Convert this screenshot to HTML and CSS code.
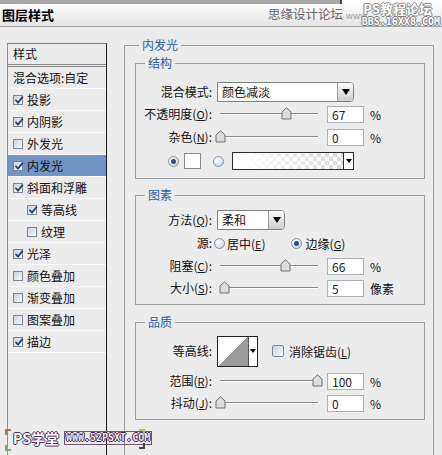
FILE: index.html
```html
<!DOCTYPE html>
<html lang="zh-CN">
<head>
<meta charset="utf-8">
<title>图层样式</title>
<link rel="stylesheet" href="styles.css">
</head>
<body>
<div class="win">
  <div class="topstrip"><div class="behind"></div></div>
  <div class="titlebar">
    <span class="title">图层样式</span>
    <span class="site">思缘设计论坛 <small>www.</small></span>
  </div>
  <div class="main">
    <div class="side">
      <div class="side-head">样式</div>
      <div class="item">混合选项:自定</div>
      <div class="item"><span class="cb on"><svg viewBox="0 0 10 10"><path d="M1.5 4.8 L4 7.6 L8.8 1.6"/></svg></span>投影</div>
      <div class="item"><span class="cb on"><svg viewBox="0 0 10 10"><path d="M1.5 4.8 L4 7.6 L8.8 1.6"/></svg></span>内阴影</div>
      <div class="item"><span class="cb"></span>外发光</div>
      <div class="item sel"><span class="cb on"><svg viewBox="0 0 10 10"><path d="M1.5 4.8 L4 7.6 L8.8 1.6"/></svg></span>内发光</div>
      <div class="item"><span class="cb on"><svg viewBox="0 0 10 10"><path d="M1.5 4.8 L4 7.6 L8.8 1.6"/></svg></span>斜面和浮雕</div>
      <div class="item sub"><span class="cb on"><svg viewBox="0 0 10 10"><path d="M1.5 4.8 L4 7.6 L8.8 1.6"/></svg></span>等高线</div>
      <div class="item sub"><span class="cb"></span>纹理</div>
      <div class="item"><span class="cb on"><svg viewBox="0 0 10 10"><path d="M1.5 4.8 L4 7.6 L8.8 1.6"/></svg></span>光泽</div>
      <div class="item"><span class="cb"></span>颜色叠加</div>
      <div class="item"><span class="cb"></span>渐变叠加</div>
      <div class="item"><span class="cb"></span>图案叠加</div>
      <div class="item"><span class="cb on"><svg viewBox="0 0 10 10"><path d="M1.5 4.8 L4 7.6 L8.8 1.6"/></svg></span>描边</div>
    </div>

    <fieldset class="outer">
      <legend>内发光</legend>

      <fieldset class="group g1">
        <legend>结构</legend>
        <div class="row r-select">
          <span class="lbl">混合模式:</span>
          <div class="select wide"><span class="val">颜色减淡</span><span class="btn"><i class="tri"></i></span></div>
        </div>
        <div class="row r-slide">
          <span class="lbl">不透明度(<u>O</u>):</span>
          <div class="slider"><div class="track"><svg class="thumb" style="left:67%" viewBox="0 0 11 13"><path d="M1 5 L5.5 0.8 L10 5 V12 H1 Z"/></svg></div></div>
          <span class="num">67</span><span class="unit">%</span>
        </div>
        <div class="row r-slide">
          <span class="lbl">杂色(<u>N</u>):</span>
          <div class="slider"><div class="track"><svg class="thumb" style="left:0%" viewBox="0 0 11 13"><path d="M1 5 L5.5 0.8 L10 5 V12 H1 Z"/></svg></div></div>
          <span class="num">0</span><span class="unit">%</span>
        </div>
        <div class="row r-color">
          <span class="radio on"></span>
          <span class="swatch"></span>
          <span class="radio second"></span>
          <div class="grad"><span class="grad-fill"></span><span class="grad-btn"><i class="tri small"></i></span></div>
        </div>
      </fieldset>

      <fieldset class="group g2">
        <legend>图素</legend>
        <div class="row r-select">
          <span class="lbl">方法(<u>Q</u>):</span>
          <div class="select narrow"><span class="val">柔和</span><span class="btn"><i class="tri"></i></span></div>
        </div>
        <div class="row r-source">
          <span class="lbl tight">源:</span>
          <span class="radio"></span><span class="opt">居中(<u>E</u>)</span>
          <span class="radio on gap"></span><span class="opt">边缘(<u>G</u>)</span>
        </div>
        <div class="row r-slide2">
          <span class="lbl">阻塞(<u>C</u>):</span>
          <div class="slider"><div class="track"><svg class="thumb" style="left:66%" viewBox="0 0 11 13"><path d="M1 5 L5.5 0.8 L10 5 V12 H1 Z"/></svg></div></div>
          <span class="num">66</span><span class="unit">%</span>
        </div>
        <div class="row r-slide2">
          <span class="lbl">大小(<u>S</u>):</span>
          <div class="slider"><div class="track"><svg class="thumb" style="left:4%" viewBox="0 0 11 13"><path d="M1 5 L5.5 0.8 L10 5 V12 H1 Z"/></svg></div></div>
          <span class="num">5</span><span class="unit">像素</span>
        </div>
      </fieldset>

      <fieldset class="group g3">
        <legend>品质</legend>
        <div class="row r-contour">
          <span class="lbl">等高线:</span>
          <div class="contour"><span class="contour-img"></span><span class="contour-btn"><i class="tri small"></i></span></div>
          <span class="cb big"></span><span class="opt">消除锯齿(<u>L</u>)</span>
        </div>
        <div class="row r-slide2">
          <span class="lbl">范围(<u>R</u>):</span>
          <div class="slider"><div class="track"><svg class="thumb" style="left:99%" viewBox="0 0 11 13"><path d="M1 5 L5.5 0.8 L10 5 V12 H1 Z"/></svg></div></div>
          <span class="num">100</span><span class="unit">%</span>
        </div>
        <div class="row r-slide2">
          <span class="lbl">抖动(<u>J</u>):</span>
          <div class="slider"><div class="track"><svg class="thumb" style="left:0%" viewBox="0 0 11 13"><path d="M1 5 L5.5 0.8 L10 5 V12 H1 Z"/></svg></div></div>
          <span class="num">0</span><span class="unit">%</span>
        </div>
      </fieldset>
    </fieldset>
  </div>

  <div class="wm-top">
    <span class="wm-top-a">PS教程论坛</span>
    <span class="wm-top-b">BBS.16XX8.COM</span>
  </div>
  <div class="wm-bottom">
    <span class="wm-ps">PS学堂</span>
    <span class="wm-url">WWW.52PSXT.COM</span>
  </div>
  <span class="mark m1"></span>
  <span class="mark m2"></span>
  <span class="mark m3"></span>
  <span class="mark m4"></span>
</div>
</body>
</html>
```

FILE: styles.css
```css
* { box-sizing: border-box; }
html, body { margin: 0; padding: 0; }
body {
  width: 442px;
  height: 455px;
  overflow: hidden;
  background: #ececec;
  font-family: "Noto Sans CJK SC", "Noto Sans", sans-serif;
  font-size: 12px;
  color: #111;
}
.win {
  position: relative;
  width: 442px;
  height: 455px;
  overflow: hidden;
  background: #ececec;
}

/* top strip & title bar */
.topstrip {
  height: 4px;
  background: #a8a8a8;
  display: flex;
  justify-content: flex-end;
}
.behind {
  width: 102px;
  height: 4px;
  background: #fff;
  border-left: 2px solid #444;
}
.titlebar {
  height: 23px;
  background: linear-gradient(#fdfdfd, #e4e4e4);
  border-bottom: 1px solid #a3a3a3;
  display: flex;
  align-items: center;
  padding-left: 2px;
}
.title {
  font-weight: bold;
  font-size: 13px;
  line-height: 16px;
  color: #000;
}
.site {
  margin-left: auto;
  width: 174px;
  font-size: 12.5px;
  line-height: 16px;
  color: #666;
  white-space: nowrap;
}
.site small { font-size: 9px; color: #999; }

/* main */
.main {
  display: flex;
  align-items: flex-start;
}

/* side list */
.side {
  flex: none;
  margin: 16px 0 0 7px;
  width: 100px;
  height: 430px;
  border-left: 1px solid #8e8e8e;
  border-right: 1px solid #1c1c1c;
  border-top: 1px solid #7e7e7e;
}
.side-head {
  height: 23px;
  border-bottom: 3px double #8a8a8a;
  padding-left: 5px;
  line-height: 20px;
}
.item {
  height: 22px;
  border-bottom: 1px solid #fbfbfb;
  display: flex;
  align-items: center;
  gap: 4px;
  padding-left: 5px;
  line-height: 21px;
  white-space: nowrap;
}
.item.sub { padding-left: 19px; }
.item.sel { background: #7094c4; }

.cb {
  position: relative;
  flex: none;
  width: 10px;
  height: 10px;
  border: 1px solid #7c8796;
  background: linear-gradient(135deg, #c9d2de, #f9fafc);
}
.cb svg {
  position: absolute;
  left: 0;
  top: -1px;
  width: 10px;
  height: 10px;
  fill: none;
  stroke: #1f3f7c;
  stroke-width: 1.7;
}
.cb.big {
  width: 12px;
  height: 12px;
  border-radius: 2px;
  margin-left: 14px;
  margin-right: 3px;
}

/* fieldsets */
fieldset { margin: 0; min-width: 0; }
legend {
  padding: 0 3px;
  font-size: 12px;
  line-height: 14px;
  color: #2560a8;
}
.outer {
  flex: none;
  margin: 11px 0 0 17px;
  width: 310px;
  border: 1px solid #9d9d9d;
  padding: 4px 9px 80px 10px;
}
.outer > legend { margin-left: 4px; }
.group {
  width: 290px;
  border: 1px solid #9d9d9d;
  padding: 0;
}
.group > legend { margin-left: 9px; }
.g1 { padding: 12px 0 7px; }
.g2 { margin-top: 9px; padding: 8px 0 5px; }
.g3 { margin-top: 10px; padding: 6px 0 5px; }

.row {
  display: flex;
  align-items: center;
  white-space: nowrap;
}
.lbl {
  flex: none;
  width: 76px;
  margin-right: 5px;
  text-align: right;
  line-height: 14px;
}
.lbl.tight { margin-right: 2px; }
u { text-decoration: underline; font-size: 11px; }

.r-select { height: 20px; }
.r-slide { height: 22px; margin-top: 1px; }
.r-color { height: 20px; margin-top: 3px; padding-left: 32px; }
.r-source { height: 20px; margin-top: 3px; }
.g2 .r-slide2:nth-of-type(3) { margin-top: 2px; }
.r-slide2 { height: 22px; }
.r-contour { height: 32px; }
.g3 .r-slide2:nth-of-type(2) { margin-top: 3px; }

/* select */
.select {
  flex: none;
  height: 20px;
  display: flex;
  background: #fff;
  border: 1px solid #808080;
  border-radius: 0 4px 4px 0;
}
.select.wide { width: 137px; }
.select.narrow { width: 68px; }
.select .val { flex: 1; padding-left: 4px; line-height: 18px; }
.select .btn {
  width: 16px;
  border-left: 1px solid #9a9a9a;
  border-radius: 0 3px 3px 0;
  background: linear-gradient(#fbfbfb, #cdcdcd);
  display: flex;
  align-items: center;
  justify-content: center;
}
.tri {
  width: 0;
  height: 0;
  border-left: 4px solid transparent;
  border-right: 4px solid transparent;
  border-top: 6px solid #000;
}
.tri.small {
  border-left-width: 3px;
  border-right-width: 3px;
  border-top-width: 4px;
}

/* slider */
.slider {
  flex: none;
  width: 106px;
  padding-left: 3px;
}
.track {
  position: relative;
  width: 98px;
  height: 2px;
  border-top: 1px solid #8a8a8a;
  border-bottom: 1px solid #fff;
}
.thumb {
  position: absolute;
  top: -7px;
  width: 11px;
  height: 13px;
  margin-left: -5px;
}
.thumb path {
  fill: #dcdcdc;
  stroke: #6f6f6f;
  stroke-width: 1;
}
.num {
  flex: none;
  width: 37px;
  height: 17px;
  margin-left: 4px;
  padding-left: 4px;
  background: #fff;
  border: 1px solid #abb0b6;
  line-height: 15px;
  color: #222;
}
.unit { margin-left: 6px; }

/* radios */
.radio {
  flex: none;
  width: 11px;
  height: 11px;
  border-radius: 50%;
  border: 1px solid #8592a4;
  background: radial-gradient(circle at 35% 35%, #ffffff, #bccde2);
  display: flex;
  align-items: center;
  justify-content: center;
}
.radio.on::after {
  content: "";
  width: 5px;
  height: 5px;
  border-radius: 50%;
  background: #2d4f86;
}
.swatch {
  flex: none;
  width: 17px;
  height: 16px;
  margin-left: 5px;
  background: #fff;
  border: 1px solid #8a8a8a;
}
.radio.second { margin-left: 12px; }
.grad {
  flex: none;
  width: 122px;
  height: 18px;
  margin-left: 8px;
  display: flex;
  border: 1px solid #2b2b2b;
}
.grad-fill {
  flex: 1;
  background:
    linear-gradient(90deg, #fff 8%, rgba(255,255,255,0) 100%),
    repeating-conic-gradient(#d6d6d6 0 25%, #fff 0 50%) 0 0 / 8px 8px;
}
.grad-btn {
  width: 10px;
  border-left: 1px solid #2b2b2b;
  background: #fff;
  display: flex;
  align-items: center;
  justify-content: center;
}
.opt { margin-left: 2px; }
.radio.gap { margin-left: 25px; }
.radio.gap + .opt { margin-left: 4px; }

/* contour */
.contour {
  flex: none;
  width: 41px;
  height: 31px;
  display: flex;
  background: #fff;
  border: 1px solid #232323;
}
.contour-img {
  width: 30px;
  background: linear-gradient(to top left, #9b9b9b 50%, #fff 50%);
}
.contour-btn {
  flex: 1;
  border-left: 1px solid #555;
  display: flex;
  align-items: center;
  justify-content: center;
}

/* watermarks (overlays) */
.wm-top {
  position: absolute;
  left: 356px;
  top: 2px;
  width: 84px;
  display: flex;
  flex-direction: column;
  align-items: flex-end;
  line-height: 1;
  white-space: nowrap;
}
.wm-top-a {
  font-size: 13px;
  font-weight: bold;
  color: #fff;
  text-shadow: 1px 0 #8a8a8a, -1px 0 #8a8a8a, 0 1px #8a8a8a, 0 -1px #8a8a8a;
  margin-right: 8px;
}
.wm-top-b {
  margin-top: 2px;
  font-family: "DejaVu Sans Mono", monospace;
  font-size: 10px;
  font-weight: bold;
  color: #fff;
  text-shadow: 1px 0 #777, -1px 0 #777, 0 1px #777, 0 -1px #777;
}
.wm-bottom {
  position: absolute;
  left: 13px;
  top: 431px;
  display: flex;
  align-items: center;
  gap: 5px;
  line-height: 1;
  white-space: nowrap;
}
.wm-ps {
  font-size: 14px;
  font-weight: bold;
  color: #fff;
  text-shadow: 1px 0 #4b2d5e, -1px 0 #4b2d5e, 0 1px #4b2d5e, 0 -1px #4b2d5e;
}
.wm-url {
  font-family: "DejaVu Sans Mono", monospace;
  font-size: 10px;
  font-weight: bold;
  color: #efe8f4;
  padding: 1px 1px;
  border: 1px solid #6a5a78;
  text-shadow: 1px 0 #3d2350, -1px 0 #3d2350, 0 1px #3d2350, 0 -1px #3d2350;
}
.mark {
  position: absolute;
  width: 6px;
  height: 6px;
}
.m1 { left: 5px; top: 429px; border-top: 2px solid #a0785a; border-left: 2px solid #a0785a; }
.m2 { left: 5px; top: 445px; border-bottom: 2px solid #7eae6e; border-left: 2px solid #7eae6e; }
.m3 { left: 139px; top: 429px; border-top: 2px solid #c8b460; border-right: 2px solid #c8b460; }
.m4 { left: 139px; top: 443px; border-bottom: 2px solid #444; border-right: 2px solid #444; }
```
